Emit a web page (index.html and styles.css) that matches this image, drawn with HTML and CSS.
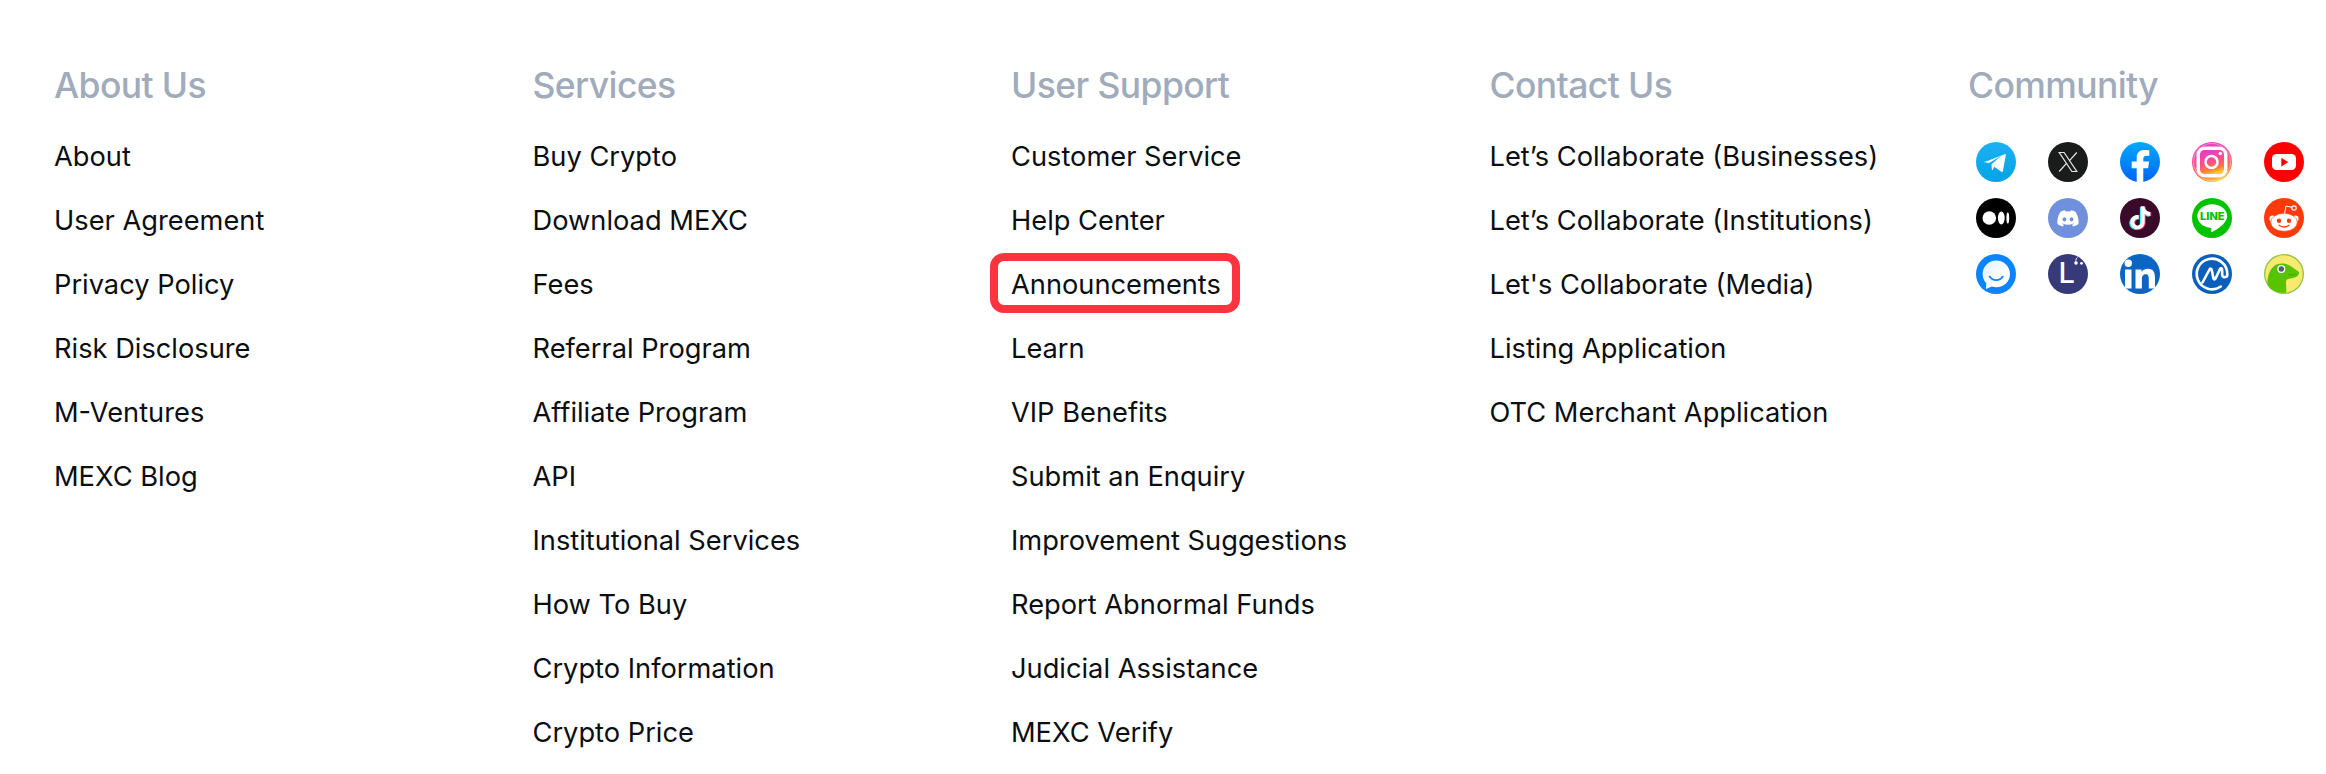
FILE: index.html
```html
<!DOCTYPE html>
<html lang="en">
<head>
<meta charset="utf-8">
<title>MEXC footer</title>
<link rel="stylesheet" href="styles.css">
</head>
<body>
<footer class="footer">
  <section class="col">
    <h2 class="col-title">About Us</h2>
    <ul class="links">
      <li class="link">About</li>
      <li class="link">User Agreement</li>
      <li class="link">Privacy Policy</li>
      <li class="link">Risk Disclosure</li>
      <li class="link">M-Ventures</li>
      <li class="link">MEXC Blog</li>
    </ul>
  </section>
  <section class="col">
    <h2 class="col-title">Services</h2>
    <ul class="links">
      <li class="link">Buy Crypto</li>
      <li class="link">Download MEXC</li>
      <li class="link">Fees</li>
      <li class="link">Referral Program</li>
      <li class="link">Affiliate Program</li>
      <li class="link">API</li>
      <li class="link">Institutional Services</li>
      <li class="link">How To Buy</li>
      <li class="link">Crypto Information</li>
      <li class="link">Crypto Price</li>
    </ul>
  </section>
  <section class="col">
    <h2 class="col-title">User Support</h2>
    <ul class="links">
      <li class="link">Customer Service</li>
      <li class="link">Help Center</li>
      <li class="link link-marked">Announcements<span class="marker"></span></li>
      <li class="link">Learn</li>
      <li class="link">VIP Benefits</li>
      <li class="link">Submit an Enquiry</li>
      <li class="link">Improvement Suggestions</li>
      <li class="link">Report Abnormal Funds</li>
      <li class="link">Judicial Assistance</li>
      <li class="link">MEXC Verify</li>
    </ul>
  </section>
  <section class="col">
    <h2 class="col-title">Contact Us</h2>
    <ul class="links">
      <li class="link">Let’s Collaborate (Businesses)</li>
      <li class="link">Let’s Collaborate (Institutions)</li>
      <li class="link">Let's Collaborate (Media)</li>
      <li class="link">Listing Application</li>
      <li class="link">OTC Merchant Application</li>
    </ul>
  </section>
  <section class="col col-community">
    <h2 class="col-title">Community</h2>
    <div class="socials">
      <svg class="social" viewBox="0 0 40 40" aria-label="Telegram">
        <defs><linearGradient id="tg" x1="0" y1="0" x2="0" y2="1"><stop offset="0" stop-color="#1fb0f5"/><stop offset="1" stop-color="#00a5e4"/></linearGradient></defs>
        <circle cx="20" cy="20" r="20" fill="url(#tg)"/>
        <path d="M8.6 20 28.800 12.300c.7-.3 1.100.2 1 .9L26.900 29c-.2.9-.8 1.100-1.500.7l-7.100-4.900-1.600 3c-.5.400-.8.100-.8-.4l-.4-5.200 9.800-8.400-12.200 7.300-4.500-.9c-.9-.2-.9-.4-.2-.7z" fill="#fff"/>
      </svg>
      <svg class="social" viewBox="0 0 40 40" aria-label="X">
        <circle cx="20" cy="20" r="20" fill="#1a1c1c"/>
        <path d="M11.200 10.500h4.900l12.700 19h-4.900zM28.800 10.500l-7.300 8.100M11.200 29.500l7.700-8.600" fill="none" stroke="#e6e6e6" stroke-width="1.200"/>
      </svg>
      <svg class="social" viewBox="0 0 40 40" aria-label="Facebook">
        <defs><linearGradient id="fb" x1="0" y1="0" x2="0" y2="1"><stop offset="0" stop-color="#00a9ff"/><stop offset="1" stop-color="#0064f5"/></linearGradient></defs>
        <circle cx="20" cy="20" r="20" fill="url(#fb)"/>
        <path d="M16.700 40V26.300h-5v-6.800h5v-4c0-5 3-7.500 7.800-7.500 2 0 4.800.4 4.800.4v5.300h-2.800c-2.500 0-3.200 1.500-3.200 3v2.800h5.800l-1 6.800h-4.800V40z" fill="#fff"/>
      </svg>
      <svg class="social" viewBox="0 0 40 40" aria-label="Instagram">
        <defs>
          <linearGradient id="ig" x1=".3" y1="0" x2=".6" y2="1"><stop offset="0" stop-color="#e23bd0"/><stop offset=".5" stop-color="#ff4f86"/><stop offset=".8" stop-color="#ff7d3c"/><stop offset="1" stop-color="#ffd02e"/></linearGradient>
        </defs>
        <circle cx="20" cy="20" r="20" fill="url(#ig)"/>
        <circle cx="20" cy="20" r="18.500" fill="none" stroke="#fff" stroke-opacity=".35" stroke-width="1.200"/>
        <rect x="4.500" y="4.500" width="31" height="31" rx="8.500" fill="#fff"/>
        <rect x="8" y="8" width="24" height="24" rx="4.500" fill="url(#ig)"/>
        <circle cx="19.500" cy="20" r="6" fill="none" stroke="#fff" stroke-width="2.500"/>
        <circle cx="28.300" cy="11.500" r="1.800" fill="#fff"/>
      </svg>
      <svg class="social" viewBox="0 0 40 40" aria-label="YouTube">
        <circle cx="20" cy="20" r="20" fill="#fe0000"/>
        <rect x="8" y="12" width="24" height="16" rx="4.500" fill="#fff"/>
        <path d="M17.300 15.700 24.200 20l-6.900 4.500z" fill="#fe0000"/>
      </svg>
      <svg class="social" viewBox="0 0 40 40" aria-label="Medium">
        <circle cx="20" cy="20" r="20" fill="#000"/>
        <circle cx="13.300" cy="20" r="6.800" fill="#fff"/>
        <ellipse cx="25.300" cy="20" rx="3.400" ry="6.400" fill="#fff"/>
        <ellipse cx="31.800" cy="20" rx="1.400" ry="5.600" fill="#fff"/>
      </svg>
      <svg class="social" viewBox="0 0 40 40" aria-label="Discord">
        <circle cx="20" cy="20" r="20" fill="#7090de"/>
        <path transform="translate(9.300 9.800) scale(.89)" d="M20.317 4.37a19.791 19.791 0 0 0-4.885-1.515.074.074 0 0 0-.079.037c-.21.375-.444.864-.608 1.25a18.27 18.27 0 0 0-5.487 0 12.64 12.64 0 0 0-.617-1.25.077.077 0 0 0-.079-.037A19.736 19.736 0 0 0 3.677 4.37a.07.07 0 0 0-.032.027C.533 9.046-.32 13.58.099 18.057a.082.082 0 0 0 .031.057 19.9 19.9 0 0 0 5.993 3.03.078.078 0 0 0 .084-.028 14.09 14.09 0 0 0 1.226-1.994.076.076 0 0 0-.041-.106 13.107 13.107 0 0 1-1.872-.892.077.077 0 0 1-.008-.128 10.2 10.2 0 0 0 .372-.292.074.074 0 0 1 .077-.01c3.928 1.793 8.18 1.793 12.062 0a.074.074 0 0 1 .078.01c.12.098.246.198.373.292a.077.077 0 0 1-.006.127 12.299 12.299 0 0 1-1.873.892.077.077 0 0 0-.041.107c.36.698.772 1.362 1.225 1.993a.076.076 0 0 0 .084.028 19.839 19.839 0 0 0 6.002-3.03.077.077 0 0 0 .032-.054c.5-5.177-.838-9.674-3.549-13.66a.061.061 0 0 0-.031-.03zM8.02 15.33c-1.183 0-2.157-1.085-2.157-2.419 0-1.333.956-2.419 2.157-2.419 1.21 0 2.176 1.096 2.157 2.42 0 1.333-.956 2.418-2.157 2.418zm7.975 0c-1.183 0-2.157-1.085-2.157-2.419 0-1.333.955-2.419 2.157-2.419 1.21 0 2.176 1.096 2.157 2.42 0 1.333-.946 2.418-2.157 2.418z" fill="#fff"/>
      </svg>
      <svg class="social" viewBox="0 0 40 40" aria-label="TikTok">
        <circle cx="20" cy="20" r="20" fill="#3a0a2b"/>
        <g transform="translate(8.800 8.300) scale(.96)">
          <path transform="translate(-1 .8)" d="M12.525.02c1.31-.02 2.61-.01 3.91-.02.08 1.53.63 3.09 1.75 4.17 1.12 1.11 2.7 1.62 4.24 1.79v4.03c-1.44-.05-2.89-.35-4.2-.97-.57-.26-1.1-.59-1.62-.93-.01 2.92.01 5.84-.02 8.75-.08 1.4-.54 2.79-1.35 3.94-1.31 1.92-3.58 3.17-5.91 3.21-1.43.08-2.86-.31-4.08-1.03-2.02-1.19-3.44-3.37-3.65-5.71-.02-.5-.03-1-.01-1.49.18-1.9 1.12-3.72 2.58-4.96 1.66-1.44 3.98-2.13 6.15-1.72.02 1.48-.04 2.96-.04 4.44-.99-.32-2.15-.23-3.02.37-.63.41-1.11 1.04-1.36 1.75-.21.51-.15 1.07-.14 1.61.24 1.64 1.82 3.02 3.5 2.87 1.12-.01 2.19-.66 2.77-1.61.19-.33.4-.67.41-1.06.1-1.79.06-3.57.07-5.36.01-4.03-.01-8.05.02-12.07z" fill="#25f4ee"/>
          <path transform="translate(1 .4)" d="M12.525.02c1.31-.02 2.61-.01 3.91-.02.08 1.53.63 3.09 1.75 4.17 1.12 1.11 2.7 1.62 4.24 1.79v4.03c-1.44-.05-2.89-.35-4.2-.97-.57-.26-1.1-.59-1.62-.93-.01 2.92.01 5.84-.02 8.75-.08 1.4-.54 2.79-1.35 3.94-1.31 1.92-3.58 3.17-5.91 3.21-1.43.08-2.86-.31-4.08-1.03-2.02-1.19-3.44-3.37-3.65-5.71-.02-.5-.03-1-.01-1.49.18-1.9 1.12-3.72 2.58-4.96 1.66-1.44 3.98-2.13 6.15-1.72.02 1.48-.04 2.96-.04 4.44-.99-.32-2.15-.23-3.02.37-.63.41-1.11 1.04-1.36 1.75-.21.51-.15 1.07-.14 1.61.24 1.64 1.82 3.02 3.5 2.87 1.12-.01 2.19-.66 2.77-1.61.19-.33.4-.67.41-1.06.1-1.79.06-3.57.07-5.36.01-4.03-.01-8.05.02-12.07z" fill="#fe2c55"/>
          <path d="M12.525.02c1.31-.02 2.61-.01 3.91-.02.08 1.53.63 3.09 1.75 4.17 1.12 1.11 2.7 1.62 4.24 1.79v4.03c-1.44-.05-2.89-.35-4.2-.97-.57-.26-1.1-.59-1.62-.93-.01 2.92.01 5.84-.02 8.75-.08 1.4-.54 2.79-1.35 3.94-1.31 1.92-3.58 3.17-5.91 3.21-1.43.08-2.86-.31-4.08-1.03-2.02-1.19-3.44-3.37-3.65-5.71-.02-.5-.03-1-.01-1.49.18-1.9 1.12-3.72 2.58-4.96 1.66-1.44 3.98-2.13 6.15-1.72.02 1.48-.04 2.96-.04 4.44-.99-.32-2.15-.23-3.02.37-.63.41-1.11 1.04-1.36 1.75-.21.51-.15 1.07-.14 1.61.24 1.64 1.82 3.02 3.5 2.87 1.12-.01 2.19-.66 2.77-1.61.19-.33.4-.67.41-1.06.1-1.79.06-3.57.07-5.36.01-4.03-.01-8.05.02-12.07z" fill="#fff"/>
        </g>
      </svg>
      <svg class="social" viewBox="0 0 40 40" aria-label="LINE">
        <circle cx="20" cy="20" r="20" fill="#00c300"/>
        <path d="M20.300 6.200C12 6.200 5.300 11.400 5.300 18c0 5.900 5.200 10.800 12.500 11.700.5.100 1.100.3 1.300.7.200.4.100 1 .1 1.400l-.2 1.200c-.1.400-.3 1.400 1.300.8 1.500-.7 8.200-4.700 11.100-7.900 2-2.200 3.800-4.600 3.800-7.900 0-6.600-6.700-11.800-14.900-11.800z" fill="#fff"/>
        <text class="line-text" x="20.300" y="22" text-anchor="middle">LINE</text>
      </svg>
      <svg class="social" viewBox="0 0 40 40" aria-label="Reddit">
        <circle cx="20" cy="20" r="20" fill="#ff3a0a"/>
        <circle cx="8.500" cy="20.700" r="3.100" fill="#fff"/>
        <circle cx="31.500" cy="20.700" r="3.100" fill="#fff"/>
        <ellipse cx="20" cy="24.300" rx="13.300" ry="9" fill="#fff" stroke="#ff3a0a" stroke-width=".6"/>
        <path d="M20.500 16 22 8l6 1.300" fill="none" stroke="#fff" stroke-width="1"/>
        <circle cx="30" cy="10" r="2.200" fill="#ff3a0a" stroke="#fff" stroke-width="1.200"/>
        <circle cx="15" cy="22.700" r="2.200" fill="#ff3a0a"/>
        <circle cx="25" cy="22.700" r="2.200" fill="#ff3a0a"/>
        <path d="M15 27.300c3 2 7 2 10 0" fill="none" stroke="#ff3a0a" stroke-width="1.300" stroke-linecap="round"/>
      </svg>
      <svg class="social" viewBox="0 0 40 40" aria-label="Messenger">
        <defs><linearGradient id="ms" x1="0" y1="0" x2="1" y2="1"><stop offset="0" stop-color="#dcefff"/><stop offset=".6" stop-color="#ffffff"/></linearGradient></defs>
        <circle cx="20" cy="20" r="20" fill="#0a84ff"/>
        <path d="M20.300 6.500c-7.600 0-13.700 6-13.700 13.500 0 3.200 1.100 6.200 3.100 8.500.5.600.7 1.300.6 2l-.4 4.600 5.900-2.600c1.400.5 2.900.8 4.500.8 7.600 0 13.700-5.800 13.700-13.300S27.900 6.500 20.300 6.500z" fill="url(#ms)"/>
        <path d="M13.600 22.600c3.400 4.800 9.800 4.800 13.200 0" fill="none" stroke="#0a84ff" stroke-width="1.800" stroke-linecap="round"/>
      </svg>
      <svg class="social" viewBox="0 0 40 40" aria-label="Lemon">
        <circle cx="20" cy="20" r="20" fill="#363a78"/>
        <text class="l-text" x="18.700" y="29" text-anchor="middle">L</text>
        <circle cx="28" cy="9" r="1.800" fill="#fff"/>
        <circle cx="33.500" cy="9.300" r="1.400" fill="#fff"/>
        <path d="M27.800 7.500c0-2 .6-3.500 1.800-4.200" fill="none" stroke="#fff" stroke-width=".9"/>
      </svg>
      <svg class="social" viewBox="0 0 40 40" aria-label="LinkedIn">
        <circle cx="20" cy="20" r="20" fill="#0a66c2"/>
        <circle cx="8.300" cy="9.300" r="3.700" fill="#fff"/>
        <rect x="5" y="15.500" width="6.500" height="19" fill="#fff"/>
        <path d="M15.500 15.500h6v2.600c1-1.800 3.300-3.300 6.300-3.300 6 0 7.200 4 7.200 9.200v10.500h-6.200v-9.200c0-2.300-.1-5-3.100-5s-3.800 2.400-3.800 4.900v9.300h-6.400z" fill="#fff"/>
      </svg>
      <svg class="social" viewBox="0 0 40 40" aria-label="CoinMarketCap">
        <circle cx="20" cy="20" r="20" fill="#0a5fbd"/>
        <path d="M28.800 32.500A15.300 15.300 0 1 1 35.300 20c0 .8 0 1.400-.2 2" fill="none" stroke="#fff" stroke-width="2.600" stroke-linecap="round"/>
        <path d="M10.500 28.500 17.500 15.500c.6-1.300 2-1 2.200.3l1.800 8.700c.2 1 1.300 1.200 1.900.2L28 15c.7-1.300 2.200-.9 2.100.5l.1 5.500c.1 1.800 2 2.800 4.400 1.600" fill="none" stroke="#fff" stroke-width="2.600" stroke-linecap="round" stroke-linejoin="round"/>
      </svg>
      <svg class="social" viewBox="0 0 40 40" aria-label="CoinGecko">
        <circle cx="20" cy="20" r="20" fill="#8dc63f"/>
        <circle cx="20" cy="20" r="18.700" fill="#f8e96f"/>
        <path d="M3.500 27C4 19 8 11.500 14 10c5-1.500 10 0 13 2.300l8 5.700c.5 2-1 4-3 5-4 2-8 1-9.500 3-1.500 3 .6 9 -.5 12.500C16 39.200 11 38 7 35c-3-2.500-3.700-5.500-3.500-8z" fill="#58c400"/>
        <circle cx="17.300" cy="15" r="4" fill="#fff"/>
        <circle cx="17.300" cy="15" r="2.700" fill="#5a5f66"/>
        <path d="M24 20.500c2.500.8 5 .6 7.500-.6" fill="none" stroke="#3b9a00" stroke-width=".8"/>
      </svg>
    </div>
  </section>
</footer>
</body>
</html>
```
FILE: styles.css
```css
* { box-sizing: border-box; }
html, body { margin: 0; padding: 0; background: #fff; overflow: hidden; }
body { font-family: Inter, "Liberation Sans", sans-serif; height: 774px; }
.footer { display: flex; padding: 62px 0 0 54px; }
.col { width: 478.5px; flex: none; }
.col-community { width: 357px; }
.col-title { margin: 0 0 15px; font-size: 35.5px; line-height: 48px; font-weight: 550; letter-spacing: -0.6px; color: #a0abbb; }
.links { list-style: none; margin: 0; padding: 0; }
.link { font-size: 27.25px; line-height: 64px; height: 64px; color: #0b0e11; white-space: nowrap; }
.link-marked { position: relative; }
.marker { position: absolute; left: -21px; top: 0; width: 250px; height: 60px; border: 8px solid #fd333f; border-radius: 14px; }
.socials { display: grid; grid-template-columns: repeat(5, 40px); gap: 16px 32px; padding: 17px 0 0 8px; }
.social { display: block; width: 40px; height: 40px; }
.line-text { font: 800 11px Inter, "Liberation Sans", sans-serif; fill: #00c300; }
.l-text { font: 500 29px Inter, "Liberation Sans", sans-serif; fill: #fff; }
```
